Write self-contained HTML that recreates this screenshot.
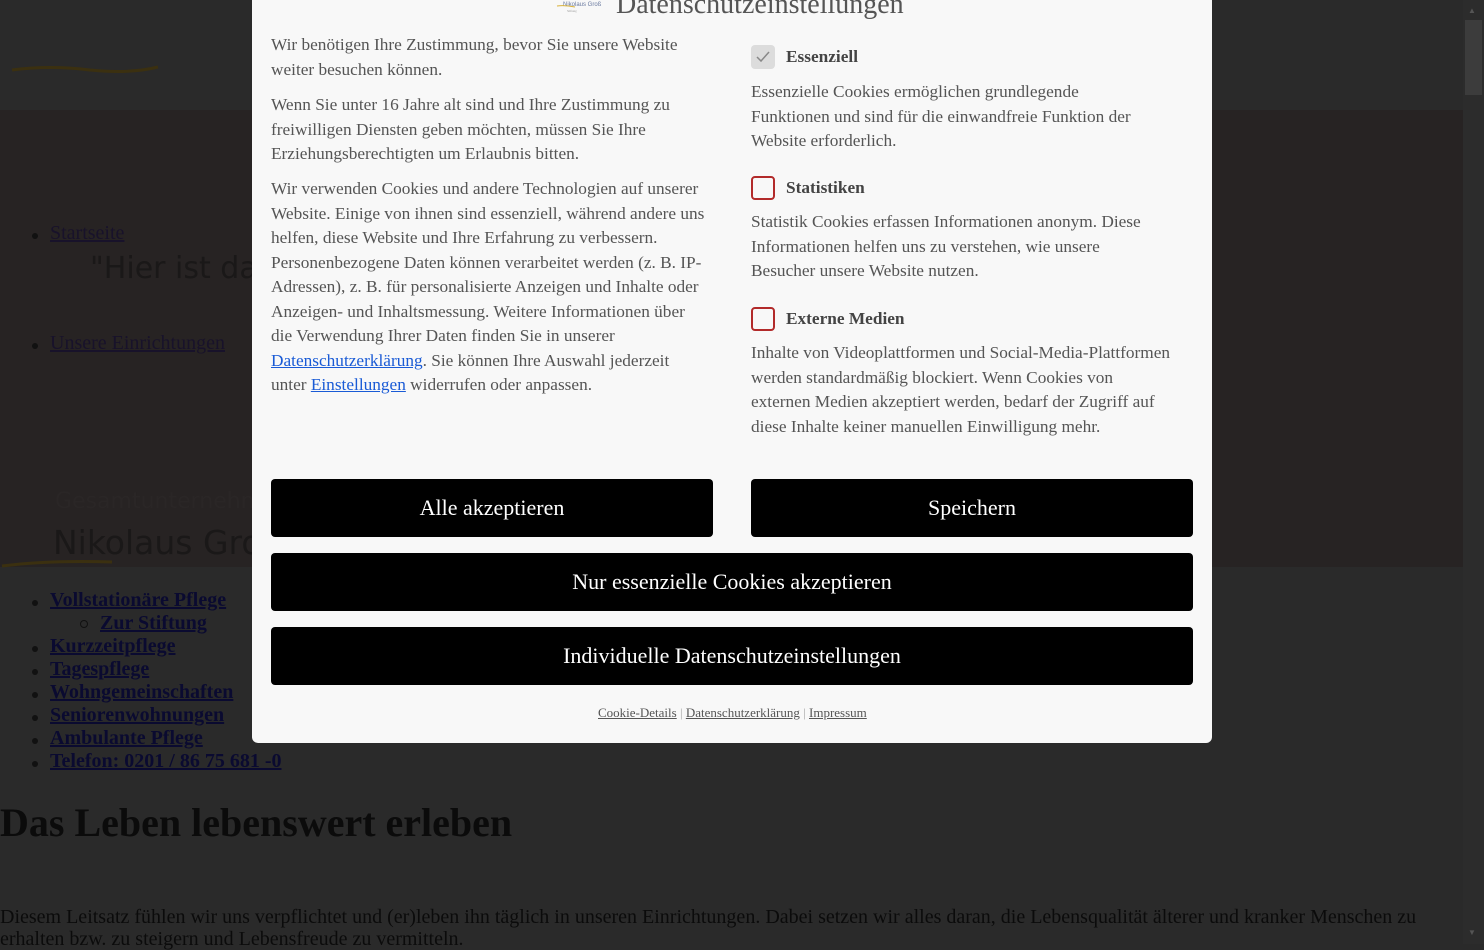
<!DOCTYPE html>
<html><head><meta charset="utf-8"><style>
*{margin:0;padding:0;box-sizing:border-box}
body{width:1484px;height:944px;overflow:hidden;background:#2a2a2a;font-family:"Liberation Serif",serif;position:relative}
.a{position:absolute;white-space:nowrap}
.nav a{color:#0a0a30;font-weight:bold;font-size:20px;text-decoration:underline}
.bul{position:absolute;width:6px;height:6px;border-radius:50%;background:#111}
#modal{position:absolute;left:252px;top:-10px;width:960px;height:753px;background:#f8f8f8;border-radius:0 0 6px 6px}
.t{position:absolute;font-size:17.3px;line-height:24.5px;color:#555;white-space:nowrap}
.t a{color:#1a5bd6}
.lab{position:absolute;font-size:17.3px;font-weight:bold;color:#444}
.cb{position:absolute;width:24px;height:24px;border:2px solid #b22a2a;border-radius:4px;background:#f8f8f8}
.btn{position:absolute;background:#000;color:#fff;font-size:22px;display:flex;align-items:center;justify-content:center;border-radius:4px;height:58px}
</style></head><body>
<div class="a" style="left:0;top:0;width:1463px;height:110px;background:#2a2a2a"></div>
<svg class="a" style="left:10px;top:62px" width="150" height="14"><path d="M2 8 Q40 3 80 8 Q120 12 148 5" stroke="#3b3010" stroke-width="3" fill="none"/></svg>
<div class="a" style="left:0;top:110px;width:1463px;height:457px;background:#272323"></div>
<svg class="a" style="left:0;top:558px" width="120" height="12"><path d="M2 8 Q50 2 112 4" stroke="#3b3010" stroke-width="3" fill="none"/></svg>
<div class="bul" style="left:32px;top:233px"></div>
<div class="a" style="left:50px;top:222px;font-size:20px;color:#18122a;text-decoration:underline">Startseite</div>
<div class="a" style="left:90px;top:251px;font-size:30px;color:#1a1818;font-family:'DejaVu Sans',sans-serif">"Hier ist das</div>
<div class="bul" style="left:32px;top:343px"></div>
<div class="a" style="left:50px;top:332px;font-size:20px;color:#18122a;text-decoration:underline">Unsere Einrichtungen</div>
<div class="a" style="left:55px;top:489px;font-size:22px;color:#2a2626;font-family:'DejaVu Sans',sans-serif">Gesamtunternehme</div>
<div class="a" style="left:53px;top:523px;font-size:33px;color:#1a1818;font-family:'DejaVu Sans',sans-serif">Nikolaus Gro</div>

<div class="nav">
<div class="bul" style="left:32px;top:600px"></div><div class="a" style="left:50px;top:589px"><a>Vollstationäre Pflege</a></div>
<div class="a" style="left:80px;top:620px;width:8px;height:8px;border:1px solid #111;border-radius:50%"></div><div class="a" style="left:100px;top:612px"><a>Zur Stiftung</a></div>
<div class="bul" style="left:32px;top:646px"></div><div class="a" style="left:50px;top:635px"><a>Kurzzeitpflege</a></div>
<div class="bul" style="left:32px;top:669px"></div><div class="a" style="left:50px;top:658px"><a>Tagespflege</a></div>
<div class="bul" style="left:32px;top:692px"></div><div class="a" style="left:50px;top:681px"><a>Wohngemeinschaften</a></div>
<div class="bul" style="left:32px;top:715px"></div><div class="a" style="left:50px;top:704px"><a>Seniorenwohnungen</a></div>
<div class="bul" style="left:32px;top:738px"></div><div class="a" style="left:50px;top:727px"><a>Ambulante Pflege</a></div>
<div class="bul" style="left:32px;top:761px"></div><div class="a" style="left:50px;top:750px"><a>Telefon: 0201 / 86 75 681 -0</a></div>
</div>
<div class="a" style="left:0;top:799px;font-size:40px;font-weight:bold;color:#0b0b0b">Das Leben lebenswert erleben</div>
<div class="a" style="left:0;top:906px;font-size:20px;color:#0b0b0b;line-height:22px">Diesem Leitsatz fühlen wir uns verpflichtet und (er)leben ihn täglich in unseren Einrichtungen. Dabei setzen wir alles daran, die Lebensqualität älterer und kranker Menschen zu<br>erhalten bzw. zu steigern und Lebensfreude zu vermitteln.</div>

<div class="a" style="left:1463px;top:0;width:21px;height:944px;background:#2c2c2c"></div>
<div class="a" style="left:1465px;top:20px;width:17px;height:75px;background:#3c3c3c"></div>
<div class="a" style="left:1468px;top:6px;font-size:8px;color:#555">▲</div>
<div class="a" style="left:1468px;top:928px;font-size:8px;color:#555">▼</div>

<div id="modal"></div>
<svg class="a" style="left:555px;top:0" width="50" height="14"><text x="8" y="6" font-size="6" fill="#6a7aa0" font-family="Liberation Sans">Nikolaus Groß</text><path d="M2 6 Q10 5 20 7" stroke="#d9b23a" fill="none"/><text x="12" y="12" font-size="3" fill="#999">Stiftung</text></svg>
<div class="a" style="left:616px;top:-11px;font-size:28px;color:#555">Datenschutzeinstellungen</div>

<div class="t" style="left:271px;top:33px">Wir benötigen Ihre Zustimmung, bevor Sie unsere Website<br>weiter besuchen können.</div>
<div class="t" style="left:271px;top:93px">Wenn Sie unter 16 Jahre alt sind und Ihre Zustimmung zu<br>freiwilligen Diensten geben möchten, müssen Sie Ihre<br>Erziehungsberechtigten um Erlaubnis bitten.</div>
<div class="t" style="left:271px;top:177px">Wir verwenden Cookies und andere Technologien auf unserer<br>Website. Einige von ihnen sind essenziell, während andere uns<br>helfen, diese Website und Ihre Erfahrung zu verbessern.<br>Personenbezogene Daten können verarbeitet werden (z. B. IP-<br>Adressen), z. B. für personalisierte Anzeigen und Inhalte oder<br>Anzeigen- und Inhaltsmessung. Weitere Informationen über<br>die Verwendung Ihrer Daten finden Sie in unserer<br><a style="text-decoration:underline">Datenschutzerklärung</a>. Sie können Ihre Auswahl jederzeit<br>unter <a style="text-decoration:underline">Einstellungen</a> widerrufen oder anpassen.</div>

<div class="a" style="left:751px;top:45px;width:24px;height:24px;background:#dcdcdc;border-radius:4px"></div>
<svg class="a" style="left:755px;top:49px" width="16" height="16"><path d="M2 8 L6 12 L14 3" stroke="#888" stroke-width="1.5" fill="none"/></svg>
<div class="lab" style="left:786px;top:47px">Essenziell</div>
<div class="t" style="left:751px;top:80px">Essenzielle Cookies ermöglichen grundlegende<br>Funktionen und sind für die einwandfreie Funktion der<br>Website erforderlich.</div>
<div class="cb" style="left:751px;top:176px"></div>
<div class="lab" style="left:786px;top:178px">Statistiken</div>
<div class="t" style="left:751px;top:210px">Statistik Cookies erfassen Informationen anonym. Diese<br>Informationen helfen uns zu verstehen, wie unsere<br>Besucher unsere Website nutzen.</div>
<div class="cb" style="left:751px;top:307px"></div>
<div class="lab" style="left:786px;top:309px">Externe Medien</div>
<div class="t" style="left:751px;top:341px">Inhalte von Videoplattformen und Social-Media-Plattformen<br>werden standardmäßig blockiert. Wenn Cookies von<br>externen Medien akzeptiert werden, bedarf der Zugriff auf<br>diese Inhalte keiner manuellen Einwilligung mehr.</div>

<div class="btn" style="left:271px;top:479px;width:442px">Alle akzeptieren</div>
<div class="btn" style="left:751px;top:479px;width:442px">Speichern</div>
<div class="btn" style="left:271px;top:553px;width:922px">Nur essenzielle Cookies akzeptieren</div>
<div class="btn" style="left:271px;top:627px;width:922px">Individuelle Datenschutzeinstellungen</div>
<div class="a" style="left:598px;top:705px;font-size:13px;color:#555"><u>Cookie-Details</u> <span style="color:#aaa">|</span> <u>Datenschutzerklärung</u> <span style="color:#aaa">|</span> <u>Impressum</u></div>
</body></html>
